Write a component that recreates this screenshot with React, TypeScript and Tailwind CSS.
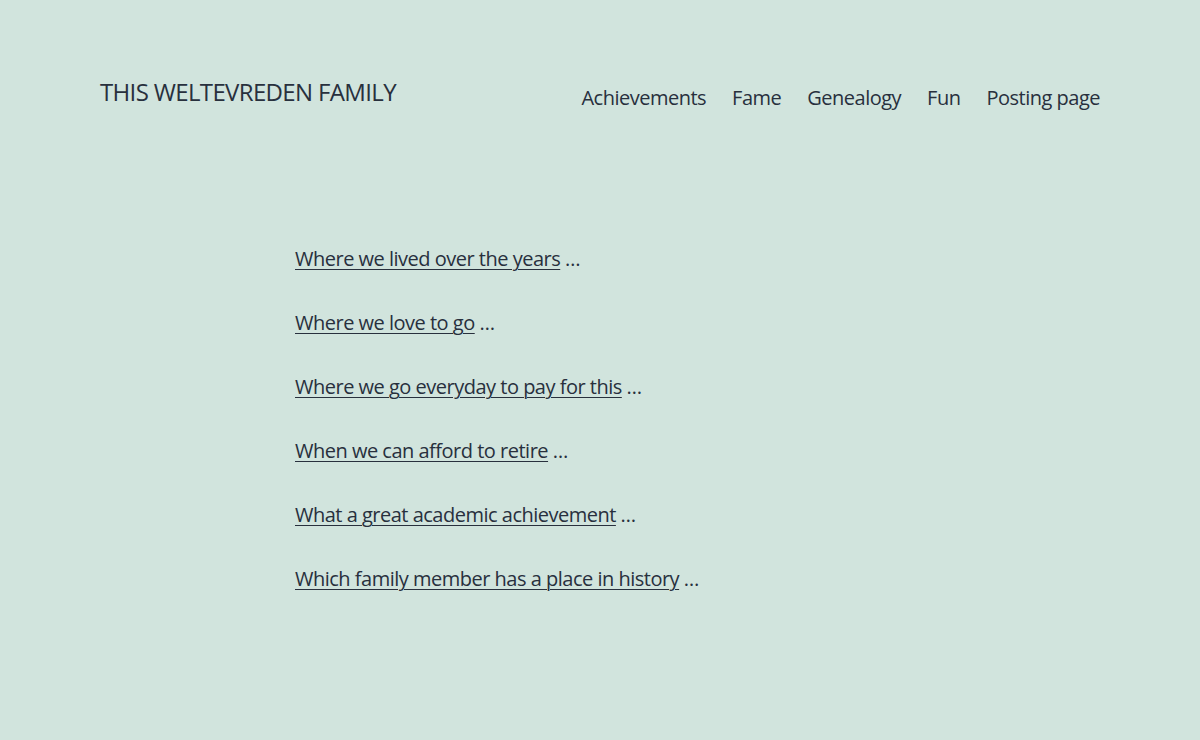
import React from 'react';

const navItems = ['Achievements', 'Fame', 'Genealogy', 'Fun', 'Posting page'];

const links = [
  'Where we lived over the years',
  'Where we love to go',
  'Where we go everyday to pay for this',
  'When we can afford to retire',
  'What a great academic achievement',
  'Which family member has a place in history',
];

export default function App() {
  return (
    <div className="min-h-[740px] bg-[#d1e4dd] text-[#28303d] font-['Open_Sans',sans-serif]">
      {/* Header */}
      <header className="flex items-start justify-between px-[100px] pt-[76px]">
        <p className="text-[24px] leading-[1.3] uppercase tracking-[-0.65px]">This Weltevreden Family</p>
        <nav className="mt-[5px] flex -mr-[13px]">
          {navItems.map((item) => (
            <a key={item} href="#" className="px-[13px] text-[20px] leading-[1.7] tracking-[-0.5px]">
              {item}
            </a>
          ))}
        </nav>
      </header>

      {/* Content */}
      <main className="mx-auto mt-[127px] w-[610px]">
        {links.map((text) => (
          <p key={text} className="mb-[30px] text-[20px] leading-[1.7] tracking-[-0.5px]">
            <a href="#" className="underline decoration-1 underline-offset-[3px]">
              {text}
            </a>{' '}
            …
          </p>
        ))}
      </main>
    </div>
  );
}
